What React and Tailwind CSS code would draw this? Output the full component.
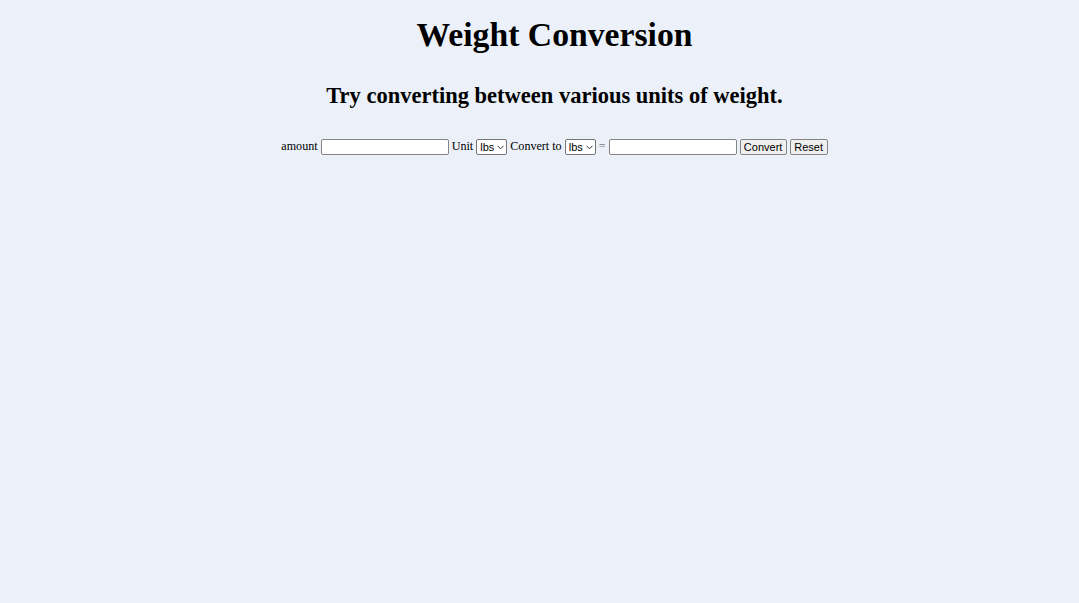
import { useState } from 'react'

function UnitSelect({ value, onChange }) {
  return (
    <span className="relative inline-block align-middle h-[16px]">
      <select
        className='appearance-none block h-[16px] w-[31px] border border-[#767676] rounded-[2px] bg-white pl-[3px] pr-[12px] text-[11px] leading-[14px] font-["Liberation_Sans",Arial,sans-serif]'
        value={value}
        onChange={(e) => onChange(e.target.value)}
      >
        <option value="lbs">lbs</option>
        <option value="kg">kg</option>
        <option value="oz">oz</option>
        <option value="g">g</option>
      </select>
      <svg className="pointer-events-none absolute right-[3px] top-[6px]" width="7" height="5" viewBox="0 0 7 5">
        <polyline points="0.5,0.8 3.5,3.8 6.5,0.8" fill="none" stroke="#333" strokeWidth="1" />
      </svg>
    </span>
  )
}

export default function App() {
  const [amount, setAmount] = useState('')
  const [unit, setUnit] = useState('lbs')
  const [target, setTarget] = useState('lbs')
  const [result, setResult] = useState('')

  const rates = { lbs: 1, kg: 2.20462, oz: 0.0625, g: 0.00220462 }

  const convert = () => {
    const v = parseFloat(amount)
    if (isNaN(v)) return
    setResult(((v * rates[unit]) / rates[target]).toFixed(2))
  }

  const reset = () => {
    setAmount('')
    setResult('')
    setUnit('lbs')
    setTarget('lbs')
  }

  const field = 'h-[16px] w-[128px] border border-[#858585] rounded-[2px] bg-white px-[2px] align-middle text-[11px]'
  const btn = 'h-[16px] border border-[#858585] rounded-[2px] bg-[#efefef] px-0 text-[11px] leading-none align-middle font-["Liberation_Sans",Arial,sans-serif]'

  return (
    <div className='min-h-[603px] bg-[#ebf0f9] font-["Liberation_Serif","Times_New_Roman",serif] text-black text-center pt-[17px] pl-[30px]'>
      <h1 className="text-[33.7px] font-bold leading-[36px]">Weight Conversion</h1>
      <h2 className="mt-[29px] text-[22.5px] font-bold leading-[28px]">Try converting between various units of weight.</h2>

      <form
        className="mt-[26px] text-[12.1px] leading-[20px]"
        onSubmit={(e) => { e.preventDefault(); convert() }}
      >
        amount{' '}
        <input className={field} value={amount} onChange={(e) => setAmount(e.target.value)} />{' '}
        Unit{' '}
        <UnitSelect value={unit} onChange={setUnit} />{' '}
        Convert to{' '}
        <UnitSelect value={target} onChange={setTarget} />{' '}
        <span className="text-[#777]">=</span>{' '}
        <input className={field} value={result} readOnly />{' '}
        <button type="submit" className={`${btn} w-[47px]`}>Convert</button>{' '}
        <button type="button" className={`${btn} w-[38px]`} onClick={reset}>Reset</button>
      </form>
    </div>
  )
}
